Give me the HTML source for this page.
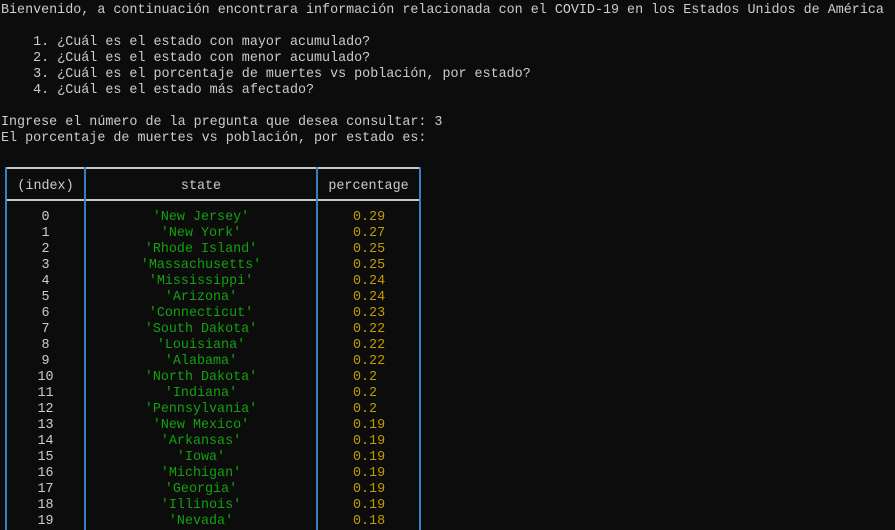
<!DOCTYPE html>
<html><head><meta charset="utf-8"><style>
body{margin:0;background:#0c0c0c;width:895px;height:530px;overflow:hidden;position:relative;font-family:"Liberation Mono",monospace;font-size:13.38px;color:#cccccc}
pre{margin:0;position:absolute;left:1px;top:3px;font:inherit;line-height:16px;white-space:pre}
.l{position:absolute;}
.h{height:2px;background:#c8c8c8}
.v{width:2px;background:#3a7fc0}
.c{position:absolute;line-height:16px;white-space:pre;text-align:center}
.g{color:#13a10e}.y{color:#c19c00}
</style></head><body>
<pre>Bienvenido, a continuación encontrara información relacionada con el COVID-19 en los Estados Unidos de América

    1. ¿Cuál es el estado con mayor acumulado?
    2. ¿Cuál es el estado con menor acumulado?
    3. ¿Cuál es el porcentaje de muertes vs población, por estado?
    4. ¿Cuál es el estado más afectado?

Ingrese el número de la pregunta que desea consultar: 3
El porcentaje de muertes vs población, por estado es:</pre>
<div class="l h" style="left:5px;top:167px;width:416px"></div>
<div class="l h" style="left:5px;top:199px;width:416px"></div>
<div class="l v" style="left:5px;top:167px;height:363px"></div>
<div class="l v" style="left:84px;top:167px;height:363px"></div>
<div class="l v" style="left:316px;top:167px;height:363px"></div>
<div class="l v" style="left:419px;top:167px;height:363px"></div>
<div class="c" style="left:7px;width:77px;top:179px">(index)</div>
<div class="c" style="left:86px;width:230px;top:179px">state</div>
<div class="c" style="left:318px;width:101px;top:179px">percentage</div>
<div class="c" style="left:7px;width:77px;top:210px">0
1
2
3
4
5
6
7
8
9
10
11
12
13
14
15
16
17
18
19</div>
<div class="c g" style="left:86px;width:230px;top:210px">'New Jersey'
'New York'
'Rhode Island'
'Massachusetts'
'Mississippi'
'Arizona'
'Connecticut'
'South Dakota'
'Louisiana'
'Alabama'
'North Dakota'
'Indiana'
'Pennsylvania'
'New Mexico'
'Arkansas'
'Iowa'
'Michigan'
'Georgia'
'Illinois'
'Nevada'</div>
<div class="c y" style="left:353px;top:210px;text-align:left">0.29
0.27
0.25
0.25
0.24
0.24
0.23
0.22
0.22
0.22
0.2
0.2
0.2
0.19
0.19
0.19
0.19
0.19
0.19
0.18</div>
</body></html>
